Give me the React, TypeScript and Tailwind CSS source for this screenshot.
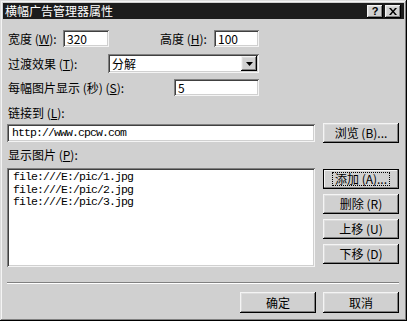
import React from 'react';

const raised =
  'bg-[#d0d0d0] shadow-[inset_-1px_-1px_#000,inset_1px_1px_#f4f4f4,inset_-2px_-2px_#808080,inset_2px_2px_#dcdcdc]';
const sunken =
  'bg-white shadow-[inset_1px_1px_#808080,inset_-1px_-1px_#f4f4f4,inset_2px_2px_#404040,inset_-2px_-2px_#d0d0d0]';

const cjk = { fontFamily: '"Noto Sans CJK SC", "Liberation Sans", sans-serif' };
const mono = { fontFamily: '"Liberation Mono", monospace' };

const Btn: React.FC<{ label: string; focused?: boolean; className?: string }> = ({ label, focused, className }) => (
  <div className={`${raised} flex items-center justify-center text-[12px] text-black ${className || ''}`}>
    <span className={focused ? 'px-[2px] outline outline-1 outline-dotted outline-black' : ''}>{label}</span>
  </div>
);

const Field: React.FC<{ value: string; className?: string }> = ({ value, className }) => (
  <div className={`${sunken} h-[17px] flex items-center pl-[4px] text-[12px] text-black ${className || ''}`}>{value}</div>
);

export default function App() {
  const files = ['file:///E:/pic/1.jpg', 'file:///E:/pic/2.jpg', 'file:///E:/pic/3.jpg'];
  return (
    <div
      style={cjk}
      className="w-[407px] h-[321px] bg-[#d0d0d0] p-[3px] flex flex-col leading-none text-black shadow-[inset_-1px_-1px_#000,inset_1px_1px_#dcdcdc,inset_-2px_-2px_#808080,inset_2px_2px_#f4f4f4]"
    >
      {/* title bar */}
      <div className="h-[16px] bg-[#1c1c1c] flex items-center pl-[2px] pr-[3px]">
        <span className="text-white text-[12px] flex-1">横幅广告管理器属性</span>
        <div className={`${raised} w-[16px] h-[13px] flex items-center justify-center text-[11px] font-bold`} style={{ fontFamily: '"Liberation Sans", sans-serif' }}>?</div>
        <div className={`${raised} w-[16px] h-[13px] ml-[2px] flex items-center justify-center`}>
          <svg width="8" height="7" viewBox="0 0 8 7">
            <path d="M0 0h2l2 2.5L6 0h2L5 3.5 8 7H6L4 4.5 2 7H0l3-3.5z" fill="#000" />
          </svg>
        </div>
      </div>

      <div className="flex flex-col pl-[4px] pr-[5px] text-[12px]">
        {/* width / height */}
        <div className="mt-[11px] flex items-center">
          <span className="w-[56px] pl-[1px]">宽度 (<u>W</u>):</span>
          <Field value="320" className="w-[46px]" />
          <span className="w-[51px]" />
          <span className="w-[54px]">高度 (<u>H</u>):</span>
          <Field value="100" className="w-[45px]" />
        </div>

        {/* transition */}
        <div className="mt-[7px] flex items-center">
          <span className="w-[101px] pl-[1px]">过渡效果 (<u>T</u>):</span>
          <div className={`${sunken} w-[151px] h-[19px] flex items-center pl-[4px] pr-[2px]`}>
            <span className="flex-1">分解</span>
            <div className={`${raised} w-[16px] h-[15px] flex items-center justify-center`}>
              <svg width="7" height="4" viewBox="0 0 7 4">
                <path d="M0 0h7L3.5 4z" fill="#000" />
              </svg>
            </div>
          </div>
        </div>

        {/* seconds */}
        <div className="mt-[6px] flex items-center">
          <span className="w-[167px] pl-[1px]">每幅图片显示 (秒) (<u>S</u>):</span>
          <Field value="5" className="w-[85px]" />
        </div>

        <div className="mt-[11px] pl-[1px]">链接到 (<u>L</u>):</div>

        <div className="mt-[4px] flex items-center">
          <div className={`${sunken} w-[308px] h-[18px] flex items-center pl-[5px] text-[11.5px] tracking-[-0.9px]`} style={mono}>
            http://www.cpcw.com
          </div>
          <div className="flex-1" />
          <Btn label="浏览 (B)..." className="w-[76px] h-[20px]" />
        </div>

        <div className="mt-[6px] pl-[1px]">显示图片 (<u>P</u>):</div>

        <div className="mt-[7px] flex">
          <div className={`${sunken} w-[308px] h-[99px] pt-[3px] pl-[6px]`}>
            {files.map((f) => (
              <div key={f} className="text-[11.5px] leading-[12.5px] h-[12.5px] tracking-[-0.9px]" style={mono}>
                {f}
              </div>
            ))}
          </div>
          <div className="flex-1" />
          <div className="w-[76px] flex flex-col gap-[5px] mt-[1px]">
            <Btn label="添加 (A)..." focused className="h-[20px] shadow-[inset_0_0_0_1px_#000,inset_-2px_-2px_#808080,inset_2px_2px_#f4f4f4]" />
            <Btn label="删除 (R)" className="h-[20px]" />
            <Btn label="上移 (U)" className="h-[20px]" />
            <Btn label="下移 (D)" className="h-[20px]" />
          </div>
        </div>

        <div className="mt-[15px] h-[2px] border-t border-[#808080] border-b-white border-b" />

        <div className="mt-[8px] flex justify-end gap-[7px]">
          <Btn label="确定" className="w-[76px] h-[21px]" />
          <Btn label="取消" className="w-[76px] h-[21px]" />
        </div>
      </div>
    </div>
  );
}
